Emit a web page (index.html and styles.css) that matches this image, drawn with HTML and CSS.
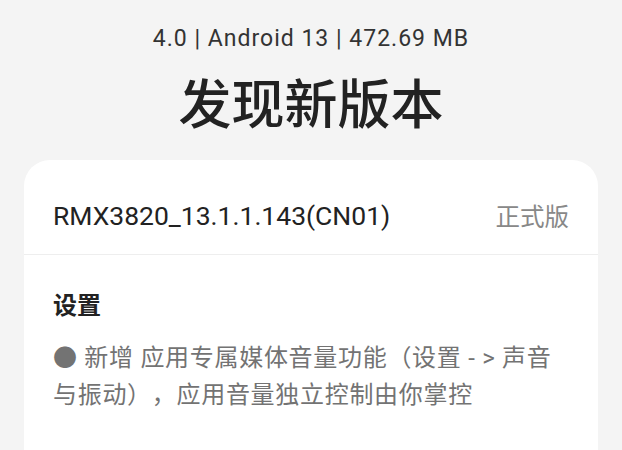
FILE: index.html
```html
<!DOCTYPE html>
<html lang="zh-CN">
<head>
    <meta charset="UTF-8">
    <meta name="viewport" content="width=device-width, initial-scale=1.0">
    <title>发现新版本</title>
    <link rel="stylesheet" href="styles.css">
</head>
<body>

    <div class="header">
        <div class="meta">4.0 | Android 13 | 472.69 MB</div>
        <h1 class="title">发现新版本</h1>
    </div>

    <div class="card">
        <div class="version-row">
            <span class="version-code">RMX3820_13.1.1.143(CN01)</span>
            <span class="version-tag">正式版</span>
        </div>
        <div class="notes">
            <h2 class="notes-title">设置</h2>
            <p class="notes-text">● 新增 应用专属媒体音量功能（设置 - &gt; 声音与振动），应用音量独立控制由你掌控</p>
        </div>
    </div>

</body>
</html>
```

FILE: styles.css
```css
/* General */
body {
    margin: 0;
    padding: 0;
    background: #f4f4f4;
    font-family: Roboto, "Noto Sans CJK SC", sans-serif;
    color: #222;
}

/* Header */
.header {
    text-align: center;
    padding-top: 24px;
}
.meta {
    font-size: 23px;
    line-height: 30px;
    letter-spacing: 1px;
    color: #333;
}
.title {
    margin: 20px 0 0;
    font-size: 53px;
    line-height: 64px;
    font-weight: 500;
    color: #222;
}

/* Card */
.card {
    margin: 22px 24px 0;
    background: white;
    border-radius: 26px 26px 0 0;
    min-height: 300px;
}

.version-row {
    display: flex;
    justify-content: space-between;
    align-items: center;
    height: 95px;
    padding: 17px 29px 0;
    box-sizing: border-box;
    border-bottom: 1px solid #eee;
}
.version-code {
    font-size: 26.5px;
    color: #222;
}
.version-tag {
    font-size: 24.5px;
    color: #888;
}

.notes {
    padding: 34px 29px 0;
}
.notes-title {
    margin: 0;
    font-size: 24px;
    line-height: 34px;
    font-weight: bold;
    color: #222;
}
.notes-text {
    margin: 17px 0 0;
    font-size: 24px;
    line-height: 37px;
    letter-spacing: 0.7px;
    text-spacing-trim: space-all;
    color: #737373;
}
```
